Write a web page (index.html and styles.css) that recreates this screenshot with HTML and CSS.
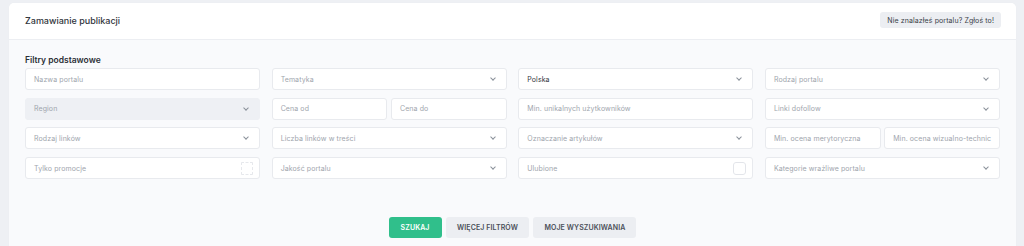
FILE: index.html
```html
<!DOCTYPE html>
<html lang="pl">
<head>
  <meta charset="UTF-8" />
  <meta name="viewport" content="width=device-width, initial-scale=1.0" />
  <title>Zamawianie publikacji</title>
  <link rel="stylesheet" href="styles.css">
</head>
<body>
  <div class="card">
    <div class="card-header">
      <h2>Zamawianie publikacji</h2>
      <button class="btn-report">Nie znalazłeś portalu? Zgłoś to!</button>
    </div>

    <div class="card-body">
      <h3>Filtry podstawowe</h3>

      <div class="filters">
        <div class="field">Nazwa portalu</div>
        <div class="field select">Tematyka <span class="chevron"></span></div>
        <div class="field select filled">Polska <span class="chevron"></span></div>
        <div class="field select">Rodzaj portalu <span class="chevron"></span></div>

        <div class="field select disabled">Region <span class="chevron"></span></div>
        <div class="pair">
          <div class="field">Cena od</div>
          <div class="field">Cena do</div>
        </div>
        <div class="field">Min. unikalnych użytkowników</div>
        <div class="field select">Linki dofollow <span class="chevron"></span></div>

        <div class="field select">Rodzaj linków <span class="chevron"></span></div>
        <div class="field select">Liczba linków w treści <span class="chevron"></span></div>
        <div class="field select">Oznaczanie artykułów <span class="chevron"></span></div>
        <div class="pair">
          <div class="field">Min. ocena merytoryczna</div>
          <div class="field">Min. ocena wizualno-technic</div>
        </div>

        <div class="field check">Tylko promocje <span class="box dashed"></span></div>
        <div class="field select">Jakość portalu <span class="chevron"></span></div>
        <div class="field check">Ulubione <span class="box"></span></div>
        <div class="field select">Kategorie wrażliwe portalu <span class="chevron"></span></div>
      </div>

      <div class="actions">
        <button class="btn btn-primary">Szukaj</button>
        <button class="btn">Więcej filtrów</button>
        <button class="btn">Moje wyszukiwania</button>
      </div>
    </div>
  </div>
</body>
</html>
```

FILE: styles.css
```css
* {
  margin: 0;
  padding: 0;
  box-sizing: border-box;
}

body {
  font-family: 'Inter', 'Noto Sans', sans-serif;
  background: #eef0f4;
  color: #2b2f36;
  padding: 3px 8px 0 9px;
  height: 246px;
  overflow: hidden;
}

.card {
  background: #f9fafc;
  border-radius: 5px 5px 0 0;
  height: 243px;
  box-shadow: 0 0 1px rgba(0, 0, 0, 0.05);
}

.card-header {
  height: 37px;
  background: #fff;
  border-bottom: 1px solid #eceef2;
  border-radius: 5px 5px 0 0;
  display: flex;
  align-items: center;
  justify-content: space-between;
  padding: 0 15px 2px 16px;
}

.card-header h2 {
  font-size: 9px;
  font-weight: 500;
  color: #30343b;
}

.btn-report {
  font-family: inherit;
  font-size: 7px;
  font-weight: 400;
  color: #3a3f47;
  background: #eceef2;
  border: none;
  border-radius: 3px;
  height: 16px;
  padding: 0 7px;
  letter-spacing: 0.1px;
}

.card-body {
  padding: 15px 16px 0;
}

.card-body h3 {
  font-size: 8.5px;
  font-weight: 600;
  color: #2b2f36;
  margin-bottom: 3px;
}

/* Filter grid */
.filters {
  display: grid;
  grid-template-columns: repeat(4, 1fr);
  column-gap: 11.5px;
  row-gap: 7.7px;
}

.pair {
  display: grid;
  grid-template-columns: 1fr 1fr;
  gap: 3.5px;
}

.field {
  height: 22px;
  background: #fff;
  border: 1px solid #e8eaee;
  border-radius: 3px;
  font-size: 7px;
  font-weight: 400;
  letter-spacing: 0.1px;
  color: #a0a5ad;
  display: flex;
  align-items: center;
  justify-content: space-between;
  padding: 0 8px 0 8px;
  white-space: nowrap;
  overflow: hidden;
}

.field.filled {
  color: #30343b;
}

.field.disabled {
  background: #eef0f4;
  border-color: #eef0f4;
}

.chevron {
  width: 4px;
  height: 4px;
  border-right: 1px solid #8a9099;
  border-bottom: 1px solid #8a9099;
  transform: rotate(45deg);
  margin: 0 3px 2px 0;
}

.check {
  padding-right: 6px;
}

.box {
  width: 13px;
  height: 13px;
  border: 1px solid #e3e5ea;
  border-radius: 3px;
  background: #fff;
}

.box.dashed {
  width: 12px;
  border: 1px dashed #e6e8ec;
  border-radius: 1px;
}

/* Buttons */
.actions {
  display: flex;
  justify-content: center;
  gap: 4.5px;
  margin-top: 38px;
}

.btn {
  font-family: inherit;
  font-size: 7px;
  font-weight: 600;
  text-transform: uppercase;
  letter-spacing: 0.1px;
  color: #4b5059;
  background: #eceef2;
  border: none;
  border-radius: 3px;
  height: 21px;
  padding: 0 11px;
}

.btn-primary {
  background: #30bf8b;
  color: #fff;
  padding: 0 12px;
}
```
